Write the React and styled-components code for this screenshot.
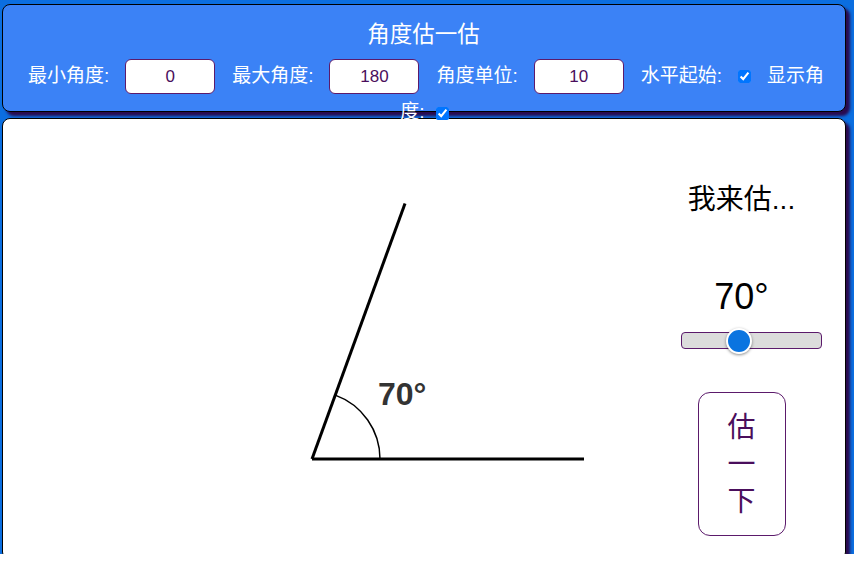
import React from "react"
import styled, { createGlobalStyle } from "styled-components"

const GlobalStyle = createGlobalStyle`
  body {
    margin: 0;
    font-family: "Liberation Sans", "Noto Sans CJK SC", sans-serif;
  }
`

const Page = styled.div`
  box-sizing: border-box;
  height: 554px;
  overflow: hidden;
  background: #0b6ee0;
  padding: 4px 8px 0 2px;
`

const Header = styled.div`
  box-sizing: border-box;
  height: 108px;
  padding: 17px 14px 0 18px;
  background: #3b82f6;
  border: 1px solid #000;
  border-radius: 8px;
  box-shadow: 4px 4px 3px #2a0a4e;
  color: #fff;
  text-align: center;
`

const Title = styled.div`
  font-size: 22.5px;
  line-height: 26px;
  margin: 0 0 10px -5px;
`

const Controls = styled.div`
  font-size: 19px;
  line-height: 36px;
`

const NumInput = styled.input`
  box-sizing: border-box;
  width: 90px;
  height: 35px;
  margin: 0 17px 0 16px;
  vertical-align: middle;
  border: 1px solid #5b1a6b;
  border-radius: 6px;
  background: #fff;
  color: #4a0e5c;
  font-family: "Liberation Sans", sans-serif;
  font-size: 17px;
  text-align: center;
`

const Check = styled.input`
  width: 13px;
  height: 13px;
  margin: 0 ${(p) => (p.$last ? 3 : 16)}px 0 ${(p) => (p.$last ? 11 : 16)}px;
  vertical-align: middle;
`

const Panel = styled.div`
  display: flex;
  height: 440px;
  margin-top: 6px;
  background: #fff;
  border: 1px solid #000;
  border-radius: 8px;
  box-shadow: 4px 4px 3px #2a0a4e;
`

const Canvas = styled.div`
  flex: 1;
`

const Side = styled.div`
  width: 162px;
  margin-right: 25px;
  display: flex;
  flex-direction: column;
  align-items: center;
  padding-top: 64px;
`

const Guess = styled.div`
  font-size: 28px;
  line-height: 34px;
  color: #000;
`

const Degrees = styled.div`
  margin-top: 60px;
  font-size: 36px;
  line-height: 40px;
  color: #000;
`

const Slider = styled.input`
  -webkit-appearance: none;
  appearance: none;
  align-self: flex-end;
  box-sizing: border-box;
  width: 141px;
  height: 17px;
  margin: 15px -2px 0 0;
  background: #dcdcdc;
  border: 1px solid #5b1a6b;
  border-radius: 4px;

  &::-webkit-slider-thumb {
    -webkit-appearance: none;
    width: 26px;
    height: 26px;
    border-radius: 50%;
    background: #0a74e0;
    border: 2px solid #fff;
    box-shadow: 0 1px 3px rgba(0, 0, 0, 0.45);
  }
`

const GoButton = styled.button`
  box-sizing: border-box;
  width: 88px;
  height: 144px;
  margin-top: 43px;
  padding: 0 20px;
  background: #fff;
  border: 1px solid #5b1a6b;
  border-radius: 12px;
  color: #4a0e5c;
  font-family: "Liberation Sans", "Noto Sans CJK SC", sans-serif;
  font-size: 28px;
  line-height: 37px;
`

const AngleFigure = ({ deg }) => {
  const x0 = 309
  const y0 = 340
  const len = 272
  const r = 68
  const rad = (deg * Math.PI) / 180
  const ex = x0 + len * Math.cos(rad)
  const ey = y0 - len * Math.sin(rad)
  const ax = x0 + r * Math.cos(rad)
  const ay = y0 - r * Math.sin(rad)
  return (
    <svg width="660" height="440">
      <line x1={x0} y1={y0} x2={x0 + len} y2={y0} stroke="#000" strokeWidth="3" />
      <line x1={x0} y1={y0} x2={ex} y2={ey} stroke="#000" strokeWidth="3" />
      <path d={`M ${x0 + r} ${y0} A ${r} ${r} 0 0 0 ${ax} ${ay}`} fill="none" stroke="#000" strokeWidth="1.5" />
      <text x="375" y="286" fontFamily="Liberation Sans, sans-serif" fontWeight="bold" fontSize="32" fill="#333">
        {deg}°
      </text>
    </svg>
  )
}

export default function App() {
  const guess = 70
  return (
    <Page>
      <GlobalStyle />
      <Header>
        <Title>角度估一估</Title>
        <Controls>
          最小角度:<NumInput type="text" defaultValue="0" />
          最大角度:<NumInput type="text" defaultValue="180" />
          角度单位:<NumInput type="text" defaultValue="10" />
          水平起始:<Check type="checkbox" defaultChecked />
          显示角度:<Check type="checkbox" defaultChecked $last />
        </Controls>
      </Header>
      <Panel>
        <Canvas>
          <AngleFigure deg={70} />
        </Canvas>
        <Side>
          <Guess>我来估...</Guess>
          <Degrees>{guess}°</Degrees>
          <Slider type="range" min="0" max="180" defaultValue={guess} />
          <GoButton>估一下</GoButton>
        </Side>
      </Panel>
    </Page>
  )
}
